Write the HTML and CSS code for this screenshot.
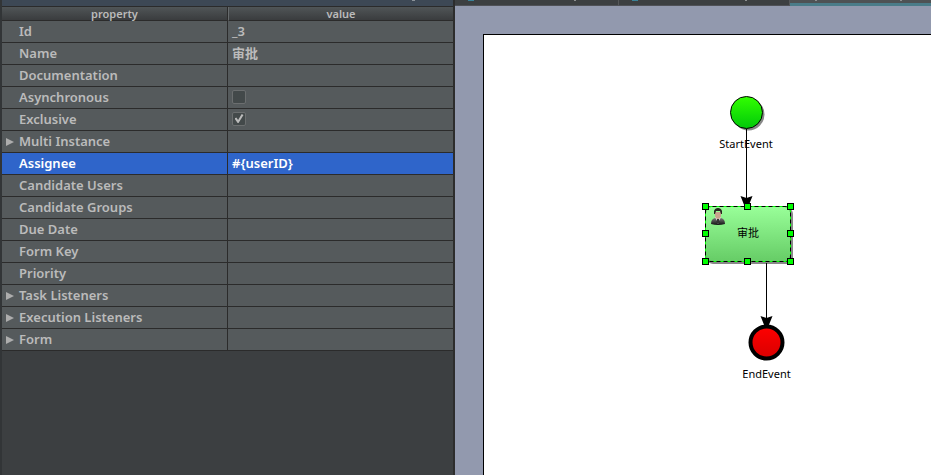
FILE: index.html
```html
<!DOCTYPE html>
<html lang="zh-CN">
<head>
<meta charset="utf-8">
<title>BPMN</title>
<link rel="stylesheet" href="styles.css">
</head>
<body>
<div class="app">
  <section class="props">
    <div class="props-title"><svg class="fleck" width="3" height="1" aria-hidden="true"><rect width="3" height="1" fill="#8b9299"/></svg></div>
    <table class="grid">
      <colgroup><col class="col-name"><col></colgroup>
      <thead><tr><th scope="col">property</th><th scope="col">value</th></tr></thead>
      <tbody>
        <tr><th scope="row">Id</th><td>_3</td></tr>
        <tr><th scope="row">Name</th><td>审批</td></tr>
        <tr><th scope="row">Documentation</th><td></td></tr>
        <tr><th scope="row"><label for="async">Asynchronous</label></th><td><input type="checkbox" id="async"></td></tr>
        <tr><th scope="row"><label for="excl">Exclusive</label></th><td><input type="checkbox" id="excl" checked></td></tr>
        <tr class="group"><th scope="row">Multi Instance</th><td></td></tr>
        <tr class="selected"><th scope="row">Assignee</th><td>#{userID}</td></tr>
        <tr><th scope="row">Candidate Users</th><td></td></tr>
        <tr><th scope="row">Candidate Groups</th><td></td></tr>
        <tr><th scope="row">Due Date</th><td></td></tr>
        <tr><th scope="row">Form Key</th><td></td></tr>
        <tr><th scope="row">Priority</th><td></td></tr>
        <tr class="group"><th scope="row">Task Listeners</th><td></td></tr>
        <tr class="group"><th scope="row">Execution Listeners</th><td></td></tr>
        <tr class="group"><th scope="row">Form</th><td></td></tr>
      </tbody>
    </table>
  </section>
  <main class="editor">
    <div class="tabs">
      <div class="tab"><svg width="160" height="1" aria-hidden="true"><rect x="13" width="6" height="1" fill="#3b8196"/><rect x="119" width="2" height="1" fill="#8d8f90"/></svg></div>
      <div class="tab"><svg width="160" height="1" aria-hidden="true"><rect x="13" width="6" height="1" fill="#3b8196"/><rect x="126" width="2" height="1" fill="#8d8f90"/></svg></div>
      <div class="tab active"><svg width="140" height="1" aria-hidden="true"><rect x="25" width="2" height="1" fill="#8d8f90"/><rect x="110" width="2" height="1" fill="#8d8f90"/></svg></div>
    </div>
    <div class="canvas">
      <div class="sheet">
        <svg class="diagram" width="440" height="400" viewBox="0 0 440 400">
          <defs>
            <linearGradient id="green" x2="0" y2="1"><stop stop-color="#32ff00"/><stop offset="1" stop-color="#00c80a"/></linearGradient>
            <linearGradient id="red" x2="0" y2="1"><stop stop-color="#ff0000"/><stop offset="1" stop-color="#d80000"/></linearGradient>
            <linearGradient id="task" x2="0" y2="1"><stop stop-color="#99ff99"/><stop offset="1" stop-color="#66cc66"/></linearGradient>
            <linearGradient id="suit" x2="0" y2="1"><stop stop-color="#777"/><stop offset="1" stop-color="#111"/></linearGradient>
            <path id="arrow" d="M-6 -10L0 -8L6 -10L2 0H-2Z"/>
            <rect id="handle" x="-3" y="-3" width="6" height="6" fill="#00ff00" stroke="#000"/>
          </defs>
          <circle cx="264.5" cy="79.5" r="16" fill="#888"/>
          <circle cx="262.5" cy="77.5" r="16" fill="url(#green)" stroke="#000"/>
          <text x="262" y="113">StartEvent</text>
          <path d="M262.5 94V164" stroke="#000"/>
          <rect x="223" y="173" width="86" height="56" rx="6" fill="#888"/>
          <rect x="221.5" y="171.5" width="85" height="55" rx="6" fill="url(#task)" stroke="#3f823f"/>
          <g class="user">
            <path d="M227 189q0-5 4-6h6q4 1 4 6q-7 2-14 0Z" fill="url(#suit)"/>
            <path d="M231 182l3 7 3-7Z" fill="#eee"/>
            <path d="M233 184h2l1 3-2 2-2-2Z" fill="#333"/>
            <path d="M231 177h6v3q0 4-3 4t-3-4Z" fill="#c9a28d"/>
            <path d="M230 179v-3q1-3 4-3t4 3v3h-1l-1-3h-4l-1 3Z" fill="#292421"/>
          </g>
          <text class="task-name" x="264" y="202">审批</text>
          <rect x="221.5" y="171.5" width="85" height="55" fill="none" stroke="#00ff00"/>
          <rect x="221.5" y="171.5" width="85" height="55" fill="none" stroke="#000" stroke-dasharray="4 3"/>
          <use href="#arrow" x="262.5" y="171"/>
          <use href="#handle" x="221.5" y="171.5"/><use href="#handle" x="263.5" y="171.5"/><use href="#handle" x="306.5" y="171.5"/>
          <use href="#handle" x="221.5" y="198.5"/><use href="#handle" x="306.5" y="198.5"/>
          <use href="#handle" x="221.5" y="226.5"/><use href="#handle" x="263.5" y="226.5"/><use href="#handle" x="306.5" y="226.5"/>
          <path d="M282.5 228V284" stroke="#000"/>
          <circle cx="282.5" cy="307.5" r="16" fill="url(#red)" stroke="#000" stroke-width="4"/>
          <use href="#arrow" x="282.5" y="291"/>
          <text x="282.5" y="343">EndEvent</text>
        </svg>
      </div>
    </div>
  </main>
</div>
</body>
</html>
```
FILE: styles.css
```css
* { box-sizing: border-box; }
body {
  margin: 0;
  font-family: "Noto Sans", "Noto Sans CJK SC", sans-serif;
  background: #3c3f41;
}
.app {
  display: grid;
  grid-template-columns: minmax(0, 455px) minmax(0, 1fr);
  min-height: 100vh;
}
.props {
  border-left: 2px solid #323537;
  border-right: 2px solid #2d2d2d;
}
.props-title {
  display: flex;
  justify-content: flex-end;
  height: 6px;
  padding-right: 38px;
  background: #3d4855;
}
.grid {
  width: 100%;
  table-layout: fixed;
  border-collapse: separate;
  border-spacing: 0;
  border-top: 1px solid #2b2b2b;
  color: #bbbbbb;
}
.col-name { width: 226px; }
.grid th, .grid td {
  height: 22px;
  padding: 0 4px 2px;
  border-bottom: 1px solid #2b2b2b;
  background: #555a5c;
  font-size: 13px;
  line-height: 18px;
  font-weight: 600;
  text-align: left;
  white-space: nowrap;
}
.grid tbody th { padding-left: 17px; }
.grid th:first-child { border-right: 1px solid #2b2b2b; }
.grid thead th {
  height: 14px;
  padding: 0;
  background: linear-gradient(#505557, #3a3c3e);
  font-size: 11px;
  line-height: 13px;
  text-align: center;
}
.grid thead th + th { border-left: 1px solid #666a6c; }
.grid .selected th, .grid .selected td {
  background: #2f65ca;
  color: #fff;
}
.grid .group th { padding-left: 4px; }
.group th::before {
  content: "";
  display: inline-block;
  margin-right: 5px;
  border: solid transparent;
  border-width: 4px 0 4px 8px;
  border-left-color: #adadad;
}
.grid input {
  appearance: none;
  display: grid;
  place-items: center;
  width: 14px;
  height: 14px;
  margin: 0;
  border: 1px solid #6b6e6f;
  border-radius: 2px;
  background: #43494a;
}
.grid input:checked::after {
  content: "";
  width: 9px;
  height: 9px;
  background: #bbbbbb;
  clip-path: polygon(0 50%, 20% 40%, 40% 68%, 80% 0, 100% 10%, 45% 100%, 35% 100%);
}
.editor {
  display: flex;
  flex-direction: column;
}
.tabs {
  display: flex;
  height: 6px;
  background: #3c3f41;
}
.tab {
  display: flex;
  flex: 0 0 164px;
  height: 6px;
  overflow: hidden;
  border-right: 1px solid #555759;
  border-bottom: 1px solid #4f5157;
}
.tab + .tab { flex-basis: 171px; }
.tab.active {
  flex: 1;
  border-right: 0;
  border-bottom: 3px solid #4a7c89;
  background: #4e5254;
}
.canvas {
  display: flex;
  flex: 1;
  padding: 28px 0 0 28px;
  background: #9299ae;
}
.sheet {
  flex: 1;
  min-width: 0;
  overflow: hidden;
  border: solid #000;
  border-width: 1px 0 0 1px;
  background: #fff;
}
.diagram { display: block; }
.diagram text {
  font-size: 11px;
  text-anchor: middle;
}
```
